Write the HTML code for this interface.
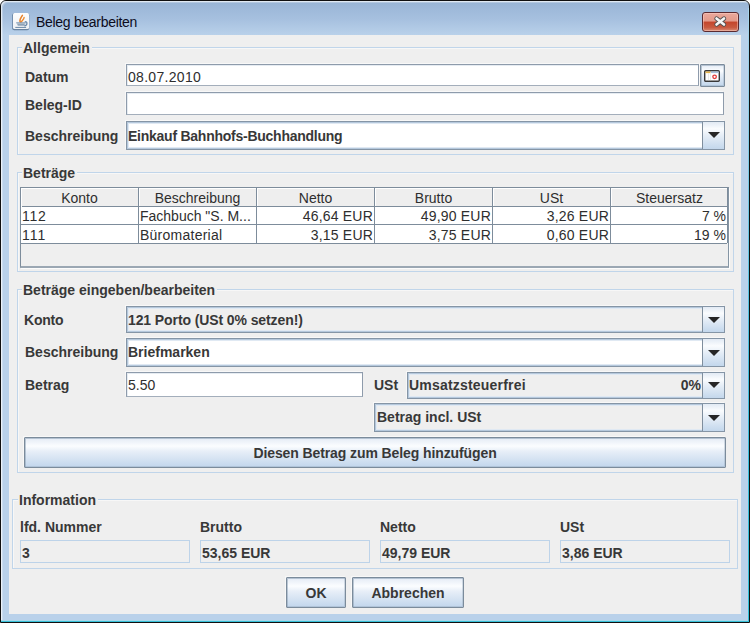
<!DOCTYPE html>
<html><head><meta charset="utf-8">
<style>
*{margin:0;padding:0;box-sizing:border-box}
html,body{width:750px;height:623px;overflow:hidden;background:#fff}
body{position:relative;font-family:"Liberation Sans",sans-serif;font-size:14px;color:#2e2e2e}
.a{position:absolute}
.t{position:absolute;line-height:16px;white-space:pre;font-size:14px;letter-spacing:0px}
.b{font-weight:bold;color:#383838}
#win{left:0;top:0;width:750px;height:623px;border:1px solid #101010;border-radius:6px 6px 0 0;
 background:linear-gradient(#98b4d5 0px,#a6c0df 18px,#b9d1ea 34px,#b9d1ea 100%);}
#hl{left:1px;top:1px;width:748px;height:621px;border-radius:5px 5px 0 0;box-shadow:inset 1px 1px 0 rgba(255,255,255,.6),inset 2px 2px 0 rgba(255,255,255,.25)}
#rc{left:748px;top:8px;width:1px;height:614px;background:linear-gradient(#a8d4ec,#40bcdc 60%,#30c0d8)}
#bc{left:1px;top:621px;width:748px;height:1px;background:#38c0d8}
#bc2{left:1px;top:620px;width:747px;height:1px;background:#a8d8ea}
#content{left:9px;top:35px;width:732px;height:579px;background:#efefef}
.grp{position:absolute;border:1px solid #c0d5ea;box-shadow:inset 1px 1px 0 #f7f7f7}
.lbl{position:absolute;background:#efefef;padding:0 2px 0 1px}
.tf{position:absolute;background:#fff;border:1px solid #8e9bab;border-bottom-color:#a3aebb;box-shadow:inset 1px 1px 0 #e6ecf2,-1px -1px 0 #f8f8f8}
.btn{position:absolute;border:1px solid #7b8b9b;border-radius:1px;
 background:linear-gradient(#e4ebf5 0%,#fbfdff 28%,#e8eff8 45%,#c2d6ec 100%);box-shadow:inset 1px 1px 0 rgba(140,160,180,.55),inset -1px -1px 0 rgba(140,160,180,.35),-1px -1px 0 #f8f8f8}
.arr{position:absolute;border-left:1px solid #7f8e9d;
 background:linear-gradient(#e2eaf4 0%,#fafcfe 25%,#e6eef7 50%,#c3d7ec 100%)}
.tri{position:absolute;width:0;height:0;border-left:6px solid transparent;border-right:6px solid transparent;border-top:6px solid #262626}
.combo{position:absolute;border:1px solid #8595a6;background:#efefef;box-shadow:inset 0 0 0 1px #b5c8dc,inset 0 0 0 2px #e0e9f3,-1px -1px 0 #f8f8f8}
.combo.w{background:#fff}
.grid{position:absolute;background:#7d8c9b}
.if{position:absolute;border:1px solid #bdd3e9;background:#efefef}
</style></head><body>
<div id="win" class="a"></div>
<div id="hl" class="a"></div>
<div id="rc" class="a"></div>
<div id="bc2" class="a"></div>
<div id="bc" class="a"></div>
<!-- java icon -->
<svg class="a" style="left:10px;top:10px" width="24" height="24" viewBox="0 0 24 24">
 <defs><linearGradient id="jg" x1="0" y1="0" x2="0" y2="1"><stop offset="0" stop-color="#fdfdfd"/><stop offset="1" stop-color="#eef1f4"/></linearGradient></defs>
 <rect x="2.2" y="3.2" width="17" height="17" rx="2" fill="#5f7b99" opacity="0.9"/>
 <rect x="3" y="3" width="16" height="16" rx="1.5" fill="url(#jg)"/>
 <path d="M10.3 12.2 C8.8 10 10.8 8.2 12.4 5.3" stroke="#e8822a" stroke-width="1.5" fill="none" stroke-linecap="round"/>
 <path d="M11 12.3 C11.6 10.6 14.2 9.6 14.1 7.4" stroke="#ec8a30" stroke-width="1.4" fill="none" stroke-linecap="round"/>
 <path d="M6.2 12.3 H15.8 V13.4 H6.2Z" fill="#7e98b2"/>
 <path d="M7 13.4 H15 L14.3 15.8 H7.8Z" fill="#8ea3b8"/>
 <path d="M14.8 11.6 C17.6 11.4 17.8 15.2 14.3 15.9" stroke="#6a8aaa" stroke-width="1.3" fill="none"/>
 <rect x="5.3" y="16.9" width="10.8" height="1" fill="#6a88a6"/>
</svg>
<div class="t" style="left:36px;top:14px;font-size:14px;letter-spacing:-0.3px;color:#0c0c1c">Beleg bearbeiten</div>
<!-- close button -->
<div class="a" style="left:702px;top:12px;width:37px;height:20px;border:1px solid #5a2a30;border-radius:3px;background:linear-gradient(#eaa89c 0%,#e39a8a 45%,#c4452c 50%,#c85a40 80%,#d98a74 100%);box-shadow:inset 0 0 0 1px rgba(255,215,205,.45)"></div>
<svg class="a" style="left:702px;top:12px" width="37" height="20" viewBox="0 0 37 20">
 <path d="M14.5 6.5 L22 12.5 M22 6.5 L14.5 12.5" stroke="#505050" stroke-width="4.4" stroke-linecap="round"/>
 <path d="M14.5 6.5 L22 12.5 M22 6.5 L14.5 12.5" stroke="#f6f6f6" stroke-width="2.6" stroke-linecap="round"/>
</svg>
<div id="content" class="a"></div>

<!-- Allgemein -->
<div class="grp" style="left:17px;top:47px;width:717px;height:108px"></div>
<div class="lbl t b" style="left:22px;top:40px">Allgemein</div>
<div class="t b" style="left:25px;top:69px">Datum</div>
<div class="t b" style="left:25px;top:97px">Beleg-ID</div>
<div class="t b" style="left:25px;top:128px">Beschreibung</div>
<div class="tf" style="left:126px;top:64px;width:573px;height:22px"></div>
<div class="t" style="left:128px;top:69px;letter-spacing:0.3px">08.07.2010</div>
<div class="btn" style="left:700px;top:64px;width:25px;height:23px"></div>
<svg class="a" style="left:704px;top:70px" width="16" height="12" viewBox="0 0 16 12">
 <rect x="0.7" y="0.7" width="14.6" height="10.6" rx="1" fill="#fff" stroke="#383838" stroke-width="1.4"/>
 <rect x="1.5" y="1.5" width="5" height="1.6" fill="#e6b44a"/>
 <rect x="7" y="1.5" width="7.5" height="1.6" fill="#a4bfdc"/>
 <rect x="4" y="3.2" width="0.6" height="7" fill="#dcdcdc"/>
 <rect x="6" y="3.2" width="0.6" height="7" fill="#dcdcdc"/>
 <circle cx="10.6" cy="6.8" r="1.75" fill="none" stroke="#e23c3c" stroke-width="1.3"/>
</svg>
<div class="tf" style="left:126px;top:92px;width:598px;height:23px"></div>
<div class="combo w" style="left:126px;top:121px;width:599px;height:29px"></div>
<div class="arr" style="left:702px;top:122px;width:22px;height:27px"></div>
<div class="tri" style="left:708px;top:132px"></div>
<div class="t b" style="left:128px;top:128px;letter-spacing:-0.25px">Einkauf Bahnhofs-Buchhandlung</div>

<!-- Beträge -->
<div class="grp" style="left:17px;top:172px;width:717px;height:100px"></div>
<div class="lbl t b" style="left:22px;top:165px">Beträge</div>
<div class="a" style="left:20px;top:187px;width:709px;height:81px;border:1px solid #7d8c9b;border-right-color:#8595a4;border-bottom:2px solid #9ba7b3;background:#efefef;box-shadow:1px 1px 0 #fcfcfc"></div>
<div class="a" style="left:21px;top:188px;width:706px;height:18px;background:#eeeeee;border-top:1px solid #fff"></div>
<div class="a" style="left:21px;top:207px;width:706px;height:36px;background:#fff"></div>
<div class="grid" style="left:22px;top:206px;width:706px;height:1px"></div>
<div class="grid" style="left:21px;top:224px;width:706px;height:1px"></div>
<div class="grid" style="left:21px;top:243px;width:706px;height:1px"></div>
<div class="a" style="left:21px;top:188px;width:1px;height:19px;background:#fff"></div>
<div class="a" style="left:139px;top:188px;width:1px;height:18px;background:#fff"></div>
<div class="a" style="left:257px;top:188px;width:1px;height:18px;background:#fff"></div>
<div class="a" style="left:375px;top:188px;width:1px;height:18px;background:#fff"></div>
<div class="a" style="left:493px;top:188px;width:1px;height:18px;background:#fff"></div>
<div class="a" style="left:611px;top:188px;width:1px;height:18px;background:#fff"></div>
<div class="grid" style="left:138px;top:188px;width:1px;height:55px"></div>
<div class="grid" style="left:256px;top:188px;width:1px;height:55px"></div>
<div class="grid" style="left:374px;top:188px;width:1px;height:55px"></div>
<div class="grid" style="left:492px;top:188px;width:1px;height:55px"></div>
<div class="grid" style="left:610px;top:188px;width:1px;height:55px"></div>
<div class="grid" style="left:727px;top:188px;width:1px;height:55px"></div>
<div class="t" style="left:21px;top:190px;width:117px;text-align:center">Konto</div>
<div class="t" style="left:139px;top:190px;width:117px;text-align:center">Beschreibung</div>
<div class="t" style="left:257px;top:190px;width:117px;text-align:center">Netto</div>
<div class="t" style="left:375px;top:190px;width:117px;text-align:center">Brutto</div>
<div class="t" style="left:493px;top:190px;width:117px;text-align:center">USt</div>
<div class="t" style="left:611px;top:190px;width:117px;text-align:center">Steuersatz</div>
<div class="t" style="left:22px;top:208px;letter-spacing:0.7px">112</div>
<div class="t" style="left:140px;top:208px">Fachbuch "S. M...</div>
<div class="t" style="left:257px;top:208px;width:116px;text-align:right;letter-spacing:0.2px">46,64 EUR</div>
<div class="t" style="left:375px;top:208px;width:116px;text-align:right;letter-spacing:0.2px">49,90 EUR</div>
<div class="t" style="left:493px;top:208px;width:116px;text-align:right;letter-spacing:0.2px">3,26 EUR</div>
<div class="t" style="left:611px;top:208px;width:115px;text-align:right">7 %</div>
<div class="t" style="left:22px;top:227px;letter-spacing:1px">111</div>
<div class="t" style="left:140px;top:227px;letter-spacing:0.25px">Büromaterial</div>
<div class="t" style="left:257px;top:227px;width:116px;text-align:right;letter-spacing:0.2px">3,15 EUR</div>
<div class="t" style="left:375px;top:227px;width:116px;text-align:right;letter-spacing:0.2px">3,75 EUR</div>
<div class="t" style="left:493px;top:227px;width:116px;text-align:right;letter-spacing:0.2px">0,60 EUR</div>
<div class="t" style="left:611px;top:227px;width:115px;text-align:right">19 %</div>

<!-- Beträge eingeben/bearbeiten -->
<div class="grp" style="left:17px;top:289px;width:717px;height:184px"></div>
<div class="lbl t b" style="left:22px;top:282px">Beträge eingeben/bearbeiten</div>
<div class="t b" style="left:24px;top:312px;letter-spacing:-0.2px">Konto</div>
<div class="t b" style="left:25px;top:344px">Beschreibung</div>
<div class="t b" style="left:25px;top:377px">Betrag</div>
<div class="combo" style="left:126px;top:306px;width:599px;height:27px"></div>
<div class="arr" style="left:702px;top:307px;width:22px;height:25px"></div>
<div class="tri" style="left:708px;top:317px"></div>
<div class="t b" style="left:128px;top:312px;letter-spacing:-0.1px">121 Porto (USt 0% setzen!)</div>
<div class="combo w" style="left:126px;top:338px;width:599px;height:29px"></div>
<div class="arr" style="left:702px;top:339px;width:22px;height:27px"></div>
<div class="tri" style="left:708px;top:350px"></div>
<div class="t b" style="left:128px;top:344px">Briefmarken</div>
<div class="tf" style="left:126px;top:372px;width:237px;height:25px"></div>
<div class="t" style="left:128px;top:377px">5.50</div>
<div class="t b" style="left:374px;top:377px">USt</div>
<div class="combo" style="left:407px;top:372px;width:318px;height:27px"></div>
<div class="arr" style="left:702px;top:373px;width:22px;height:25px"></div>
<div class="tri" style="left:708px;top:382px"></div>
<div class="t b" style="left:409px;top:377px;letter-spacing:0.2px">Umsatzsteuerfrei</div>
<div class="t b" style="left:600px;top:377px;width:101px;text-align:right">0%</div>
<div class="combo" style="left:374px;top:403px;width:351px;height:29px"></div>
<div class="arr" style="left:702px;top:404px;width:22px;height:27px"></div>
<div class="tri" style="left:708px;top:415px"></div>
<div class="t b" style="left:377px;top:409px">Betrag incl. USt</div>
<div class="btn" style="left:24px;top:437px;width:702px;height:31px"></div>
<div class="t b" style="left:24px;top:445px;width:702px;text-align:center;letter-spacing:-0.1px">Diesen Betrag zum Beleg hinzufügen</div>

<!-- Information -->
<div class="grp" style="left:12px;top:499px;width:726px;height:70px"></div>
<div class="lbl t b" style="left:18px;top:492px">Information</div>
<div class="t b" style="left:20px;top:519px">lfd. Nummer</div>
<div class="t b" style="left:200px;top:519px">Brutto</div>
<div class="t b" style="left:380px;top:519px">Netto</div>
<div class="t b" style="left:560px;top:519px">USt</div>
<div class="if" style="left:20px;top:540px;width:170px;height:23px"></div>
<div class="if" style="left:200px;top:540px;width:170px;height:23px"></div>
<div class="if" style="left:380px;top:540px;width:170px;height:23px"></div>
<div class="if" style="left:560px;top:540px;width:170px;height:23px"></div>
<div class="t b" style="left:22px;top:545px">3</div>
<div class="t b" style="left:202px;top:545px">53,65 EUR</div>
<div class="t b" style="left:382px;top:545px">49,79 EUR</div>
<div class="t b" style="left:562px;top:545px">3,86 EUR</div>

<!-- buttons -->
<div class="btn" style="left:286px;top:577px;width:60px;height:31px"></div>
<div class="t b" style="left:286px;top:585px;width:60px;text-align:center">OK</div>
<div class="btn" style="left:352px;top:577px;width:112px;height:31px"></div>
<div class="t b" style="left:352px;top:585px;width:112px;text-align:center">Abbrechen</div>
</body></html>
